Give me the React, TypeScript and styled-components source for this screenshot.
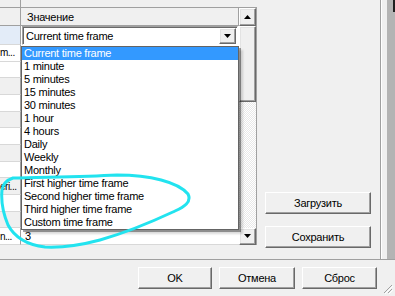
import React from "react";
import styled, { createGlobalStyle } from "styled-components";

const Global = createGlobalStyle`
  html, body { margin: 0; padding: 0; background: #f0f0f0; }
  body {
    font-family: "Liberation Sans", Arial, sans-serif;
    font-size: 11px;
    letter-spacing: -0.25px;
    color: #000;
  }
`;

const Window = styled.div`
  position: relative;
  width: 395px;
  height: 296px;
  overflow: hidden;
  background: #f0f0f0;
  display: flex;
  flex-direction: column;
`;

const Top = styled.div`
  display: flex;
  height: 260px;
  border-bottom: 1px solid #a0a0a0;
  box-sizing: border-box;
`;

const GridArea = styled.div`
  width: 257px;
  display: flex;
  flex-direction: column;
`;

const TopStrip = styled.div`
  height: 8px;
  display: flex;
  border-bottom: 1px solid #a0a0a0;
  box-sizing: border-box;
`;

const StripCell = styled.div<{ $w: number }>`
  width: ${(p) => p.$w}px;
  border-right: 1px solid #a0a0a0;
  box-sizing: border-box;
`;

const GridBody = styled.div`
  display: flex;
  border-right: 1px solid #a0a0a0;
`;

const Table = styled.div`
  width: 239px;
  display: flex;
  flex-direction: column;
`;

const Row = styled.div<{ $h: number }>`
  display: flex;
  height: ${(p) => p.$h}px;
  box-sizing: border-box;
`;

const NameCell = styled.div<{ $bg?: string }>`
  width: 21px;
  box-sizing: border-box;
  border-right: 1px solid #a0a0a0;
  border-bottom: 1px solid #d8d8d8;
  background: ${(p) => p.$bg || "#ffffff"};
  overflow: hidden;
  white-space: nowrap;
  display: flex;
  align-items: center;
  font-size: 10px;
  letter-spacing: -0.5px;
`;

const ValueCell = styled.div`
  flex: 1;
  background: #fff;
  border-bottom: 1px solid #d8d8d8;
  box-sizing: border-box;
  display: flex;
  align-items: center;
  padding-left: 4px;
`;

const HeaderCell = styled.div<{ $w?: number }>`
  ${(p) => (p.$w ? `width: ${p.$w}px;` : "flex: 1;")}
  box-sizing: border-box;
  background: #f0f0f0;
  border-right: 1px solid #a0a0a0;
  border-bottom: 1px solid #a0a0a0;
  display: flex;
  align-items: center;
  padding-left: 6px;
`;

const EditCell = styled.div`
  flex: 1;
  background: #fff;
  padding: 0 1px;
  display: flex;
  align-items: center;
`;

const Combo = styled.div`
  flex: 1;
  height: 19px;
  box-sizing: border-box;
  border-top: 1px solid #a0a0a0;
  border-left: 1px solid #a0a0a0;
  border-right: 1px solid #fff;
  border-bottom: 1px solid #fff;
  box-shadow: inset 1px 1px 0 #696969;
  background: #fff;
  display: flex;
  align-items: center;
  padding: 2px 1px 1px 3px;
`;

const ComboText = styled.div`
  flex: 1;
`;

const RaisedButton = styled.div<{ $w: number; $h: number }>`
  width: ${(p) => p.$w}px;
  height: ${(p) => p.$h}px;
  box-sizing: border-box;
  background: #f0f0f0;
  border-top: 1px solid #fff;
  border-left: 1px solid #fff;
  border-right: 1px solid #696969;
  border-bottom: 1px solid #696969;
  box-shadow: inset -1px -1px 0 #a0a0a0, inset 1px 1px 0 #e3e3e3;
  display: flex;
  align-items: center;
  justify-content: center;
  flex-shrink: 0;
`;

const Scrollbar = styled.div`
  width: 17px;
  display: flex;
  flex-direction: column;
`;

const Track = styled.div`
  flex: 1;
  background-color: #f6f6f6;
  background-image: repeating-conic-gradient(#ffffff 0 25%, #e8e8e8 0 50%);
  background-size: 2px 2px;
`;

const RightPanel = styled.div`
  width: 124px;
  display: flex;
  flex-direction: column;
  align-items: flex-start;
  justify-content: flex-end;
  gap: 12px;
  padding: 0 0 11px 8px;
  box-sizing: border-box;
  border-right: 1px solid #a0a0a0;
`;

const RightEdge = styled.div`
  flex: 1;
  display: flex;
`;

const EdgeLight = styled.div`
  width: 5px;
  background: #f0f0f0;
  border-left: 1px solid #ffffff;
`;

const EdgeGray = styled.div`
  flex: 1;
  background: #b4b4b4;
  position: relative;
`;

const EdgeMark = styled.div`
  position: absolute;
  right: 0;
  top: 0;
  width: 2px;
  height: 12px;
  background: #202020;
`;

const PushButton = styled.button<{ $w: number }>`
  width: ${(p) => p.$w}px;
  height: 22px;
  box-sizing: border-box;
  background: #f0f0f0;
  border-top: 1px solid #fff;
  border-left: 1px solid #fff;
  border-right: 1px solid #696969;
  border-bottom: 1px solid #696969;
  box-shadow: inset -1px -1px 0 #a0a0a0;
  font-family: "Liberation Sans", Arial, sans-serif;
  font-size: 11px;
  letter-spacing: -0.25px;
  color: #000;
  padding: 0;
  margin: 0;
`;

const Bottom = styled.div`
  flex: 1;
  display: flex;
  justify-content: flex-end;
  align-items: flex-start;
  gap: 7px;
  padding: 7px 18px 0 0;
  position: relative;
`;

const DropList = styled.div`
  position: absolute;
  left: 21px;
  top: 46px;
  width: 218px;
  box-sizing: border-box;
  border: 1px solid #646464;
  background: #fff;
  box-shadow: 2px 2px 0 rgba(0, 0, 0, 0.35), 4px 4px 2px rgba(0, 0, 0, 0.15);
`;

const Item = styled.div<{ $sel?: boolean }>`
  height: 13px;
  line-height: 13px;
  padding-left: 2px;
  white-space: nowrap;
  background: ${(p) => (p.$sel ? "#3399ff" : "#fff")};
  color: ${(p) => (p.$sel ? "#fff" : "#000")};
`;

const Annotation = styled.svg`
  position: absolute;
  left: 0;
  top: 0;
  pointer-events: none;
`;

const Grip = styled.svg`
  position: absolute;
  right: 2px;
  bottom: 2px;
`;

const Arrow = ({ up }: { up?: boolean }) => (
  <svg width="7" height="4" viewBox="0 0 7 4">
    <path d={up ? "M0 4 L3.5 0 L7 4 Z" : "M0 0 L7 0 L3.5 4 Z"} fill="#000" />
  </svg>
);

const items = [
  "Current time frame",
  "1 minute",
  "5 minutes",
  "15 minutes",
  "30 minutes",
  "1 hour",
  "4 hours",
  "Daily",
  "Weekly",
  "Monthly",
  "First higher time frame",
  "Second higher time frame",
  "Third higher time frame",
  "Custom time frame",
];

const rows: { name: string; bg: string; value: string }[] = [
  { name: "m...", bg: "#fff", value: "" },
  { name: "", bg: "#fff", value: "" },
  { name: "", bg: "#f0f0f0", value: "" },
  { name: "", bg: "#fff", value: "" },
  { name: "", bg: "#f0f0f0", value: "" },
  { name: "", bg: "#fff", value: "" },
  { name: "", bg: "#f0f0f0", value: "" },
  { name: "", bg: "#fff", value: "" },
  { name: "eri...", bg: "#f0f0f0", value: "" },
  { name: "", bg: "#fff", value: "" },
  { name: "", bg: "#f0f0f0", value: "" },
  { name: "n...", bg: "#fff", value: "3" },
];

export default function App() {
  return (
    <>
      <Global />
      <Window>
        <Top>
          <GridArea>
            <TopStrip>
              <StripCell $w={21} />
            </TopStrip>
            <GridBody>
              <Table>
                <Row $h={18}>
                  <HeaderCell $w={21} />
                  <HeaderCell>Значение</HeaderCell>
                </Row>
                <Row $h={19}>
                  <NameCell $bg="#e3ecf8" />
                  <EditCell>
                    <Combo>
                      <ComboText>Current time frame</ComboText>
                      <RaisedButton $w={17} $h={16}>
                        <Arrow />
                      </RaisedButton>
                    </Combo>
                  </EditCell>
                </Row>
                {rows.map((r, i) => (
                  <Row key={i} $h={16.67}>
                    <NameCell $bg={r.bg}>{r.name}</NameCell>
                    <ValueCell>{r.value}</ValueCell>
                  </Row>
                ))}
              </Table>
              <Scrollbar>
                <RaisedButton $w={17} $h={18}>
                  <Arrow up />
                </RaisedButton>
                <RaisedButton $w={17} $h={76} />
                <Track />
                <RaisedButton $w={17} $h={17}>
                  <Arrow />
                </RaisedButton>
              </Scrollbar>
            </GridBody>
          </GridArea>
          <RightPanel>
            <PushButton $w={106}>Загрузить</PushButton>
            <PushButton $w={106}>Сохранить</PushButton>
          </RightPanel>
          <RightEdge>
            <EdgeLight />
            <EdgeGray>
              <EdgeMark />
            </EdgeGray>
          </RightEdge>
        </Top>
        <Bottom>
          <PushButton $w={74}>OK</PushButton>
          <PushButton $w={76}>Отмена</PushButton>
          <PushButton $w={75}>Сброс</PushButton>
          <Grip width="12" height="12" viewBox="0 0 12 12">
            <path d="M11 3 L3 11 M11 7 L7 11" stroke="#a0a0a0" strokeWidth="1" />
            <path d="M12 4 L4 12 M12 8 L8 12" stroke="#fff" strokeWidth="1" />
          </Grip>
        </Bottom>
        <DropList>
          {items.map((t, i) => (
            <Item key={t} $sel={i === 0}>
              {t}
            </Item>
          ))}
        </DropList>
        <Annotation width="395" height="296" viewBox="0 0 395 296">
          <path
            d="M13 178 C40 177 80 177 117 175 C150 175 178 182 188 194 C192 202 184 207 175 211 C160 218 135 230 100 240 C85 244 65 248 45 247 C28 245 15 238 8 225 C3 213 1 200 2 190 C3 184 7 180 13 178"
            fill="none"
            stroke="#22e3ef"
            strokeWidth="3"
            strokeLinecap="round"
            strokeLinejoin="round"
          />
        </Annotation>
      </Window>
    </>
  );
}
